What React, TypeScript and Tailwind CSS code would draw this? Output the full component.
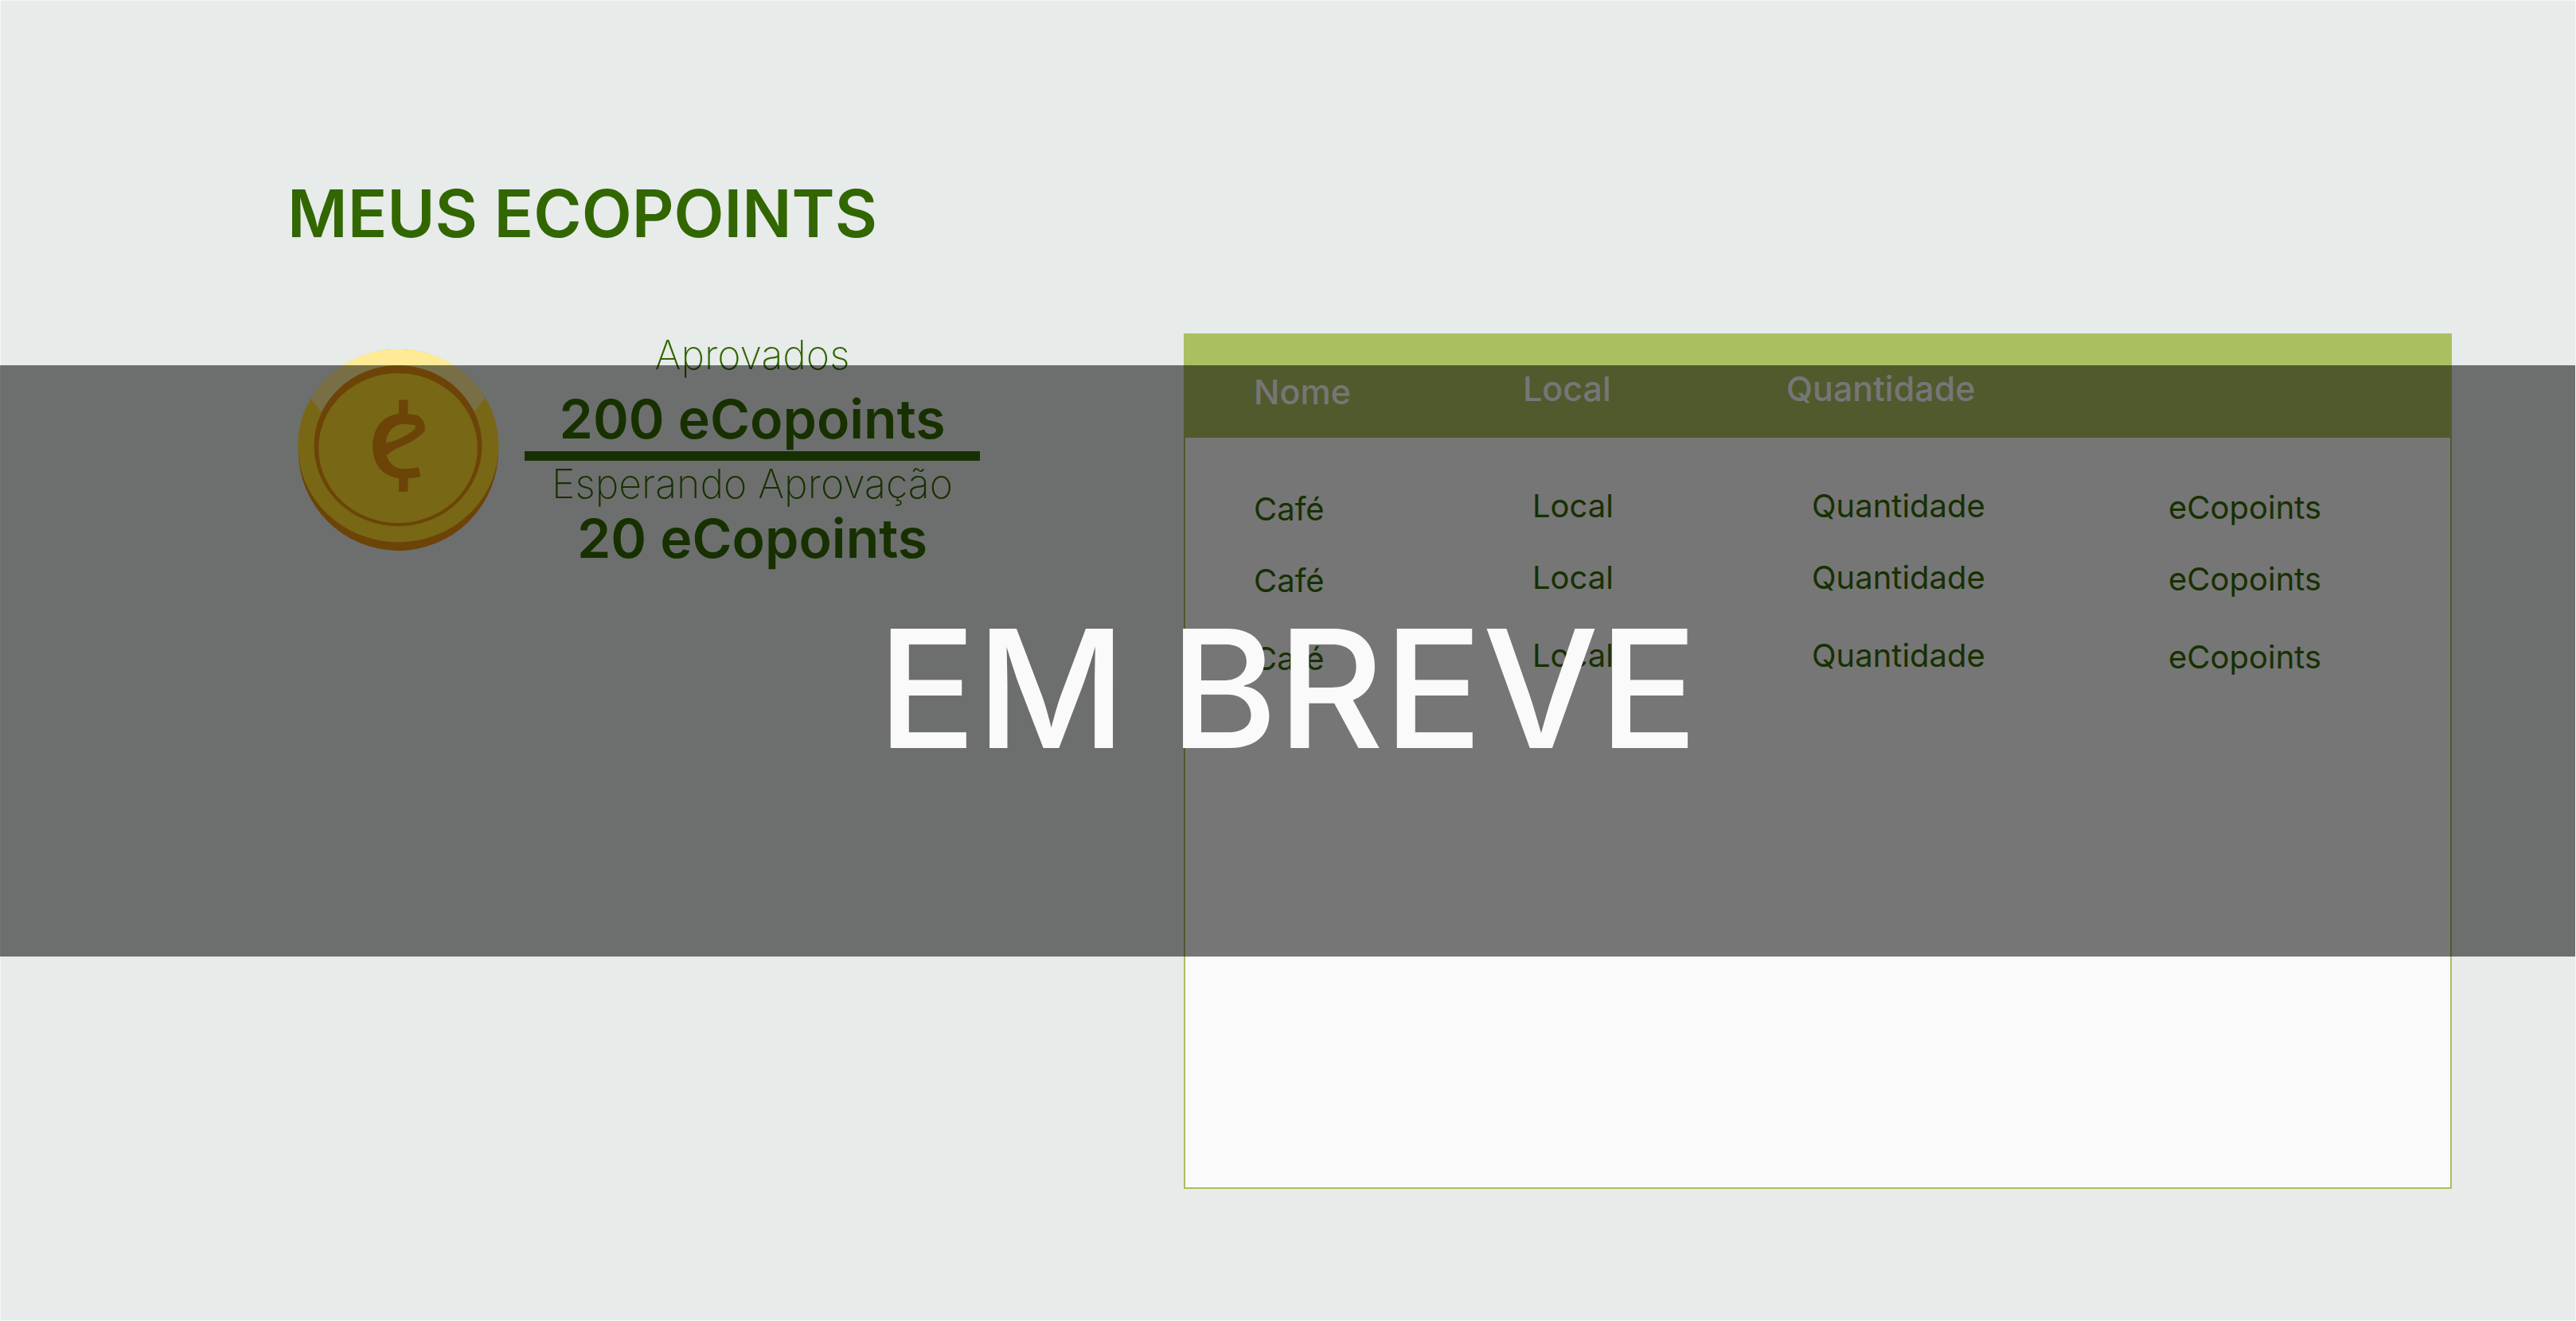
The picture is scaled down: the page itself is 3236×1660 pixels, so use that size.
const rows = [
  { nome: "Café", local: "Local", quantidade: "Quantidade", pontos: "eCopoints", space: "h-[90px]" },
  { nome: "Café", local: "Local", quantidade: "Quantidade", pontos: "eCopoints", space: "h-[98px]" },
  { nome: "Café", local: "Local", quantidade: "Quantidade", pontos: "eCopoints", space: "h-[90px]" },
];

function Coin() {
  return (
    <svg viewBox="105 117 755 758" className="mt-5 h-[253px] w-[253px] shrink-0" role="img" aria-label="eCopoint">
      <defs>
        <clipPath id="face">
          <ellipse cx="482" cy="480" rx="378" ry="363" />
        </clipPath>
      </defs>
      <ellipse cx="482" cy="496" rx="377" ry="379" fill="#E6910F" />
      <ellipse cx="482" cy="480" rx="378" ry="363" fill="#FFDA2B" />
      <path clipPath="url(#face)" d="M105 242 L190 350 H770 L860 237 V100 H105 Z" fill="#FFEB96" />
      <ellipse cx="481" cy="480" rx="316" ry="303" fill="#E6910F" />
      <ellipse cx="481" cy="489" rx="299" ry="282" fill="#FFDA2B" />
      <path
        fill="#E6910F"
        fillRule="evenodd"
        d="M484 307H518V360L556 366C572 378 582 392 582 410V425Q560 448 525 468L470 493Q450 505 438 516C448 550 475 567 500 567Q530 567 558 561L566 596Q540 602 518 602V653H484V602C420 595 386 545 386 485C386 415 420 368 484 360ZM436 470C438 428 465 398 505 398L545 402Q552 412 535 425Q490 458 436 470Z"
      />
    </svg>
  );
}

function Balance() {
  return (
    <section className="w-[572px] shrink-0 text-center text-[#326600]">
      <p className="text-[50px] leading-[54px] font-extralight">Aprovados</p>
      <p className="mt-3 text-[68px] leading-[82px] font-semibold">200 eCopoints</p>
      <hr className="h-3 border-0 bg-[#326600]" />
      <p className="text-[50px] leading-[58px] font-extralight">Esperando Aprovação</p>
      <p className="text-[68px] leading-[78px] font-semibold">20 eCopoints</p>
    </section>
  );
}

export default function App() {
  return (
    <main className="relative min-h-screen border border-[#f4f6f5] bg-[#E7EBEA] pb-40 font-['Inter',sans-serif]">
      <h1 className="pt-[218px] pl-[360px] text-[82px] leading-[100px] font-semibold text-[#326600]">MEUS ECOPOINTS</h1>
      <div className="mt-[100px] flex items-start pr-[155px] pl-[373px]">
        <Coin />
        <div className="ml-8">
          <Balance />
        </div>
        <div className="ml-64 min-h-[1075px] flex-1 border-2 border-[#AABF60] bg-[#FAFAFA]">
          <table className="w-full table-fixed text-left">
            <colgroup>
              <col className="w-[424px]" />
              <col className="w-[331px]" />
              <col className="w-[480px]" />
              <col />
            </colgroup>
            <thead className="bg-[#AABF60] text-[43px] leading-[50px] text-[#FAFAFA]">
              <tr className="h-[129px] align-top">
                <th className="pt-[46px] pl-[86px] font-medium">Nome</th>
                <th className="pt-[42px] font-medium">Local</th>
                <th className="pt-[42px] font-medium">Quantidade</th>
                <td />
              </tr>
            </thead>
            <tbody className="text-[40px] leading-[50px] text-[#326600]">
              <tr className="h-[61px]">
                <td colSpan={4} />
              </tr>
              {rows.map((row, index) => (
                <tr key={index} className={`${row.space} align-top`}>
                  <td className="pt-1 pl-[86px]">{row.nome}</td>
                  <td className="pl-[12px]">{row.local}</td>
                  <td className="pl-8">{row.quantidade}</td>
                  <td className="pt-[2px]">{row.pontos}</td>
                </tr>
              ))}
            </tbody>
          </table>
        </div>
      </div>
      <div className="absolute -left-px right-0 top-[458px] flex h-[743px] items-center justify-center bg-black/53 pt-[68px]">
        <p className="text-[206px] leading-none font-medium text-[#FAFAFA]">EM BREVE</p>
      </div>
    </main>
  );
}
